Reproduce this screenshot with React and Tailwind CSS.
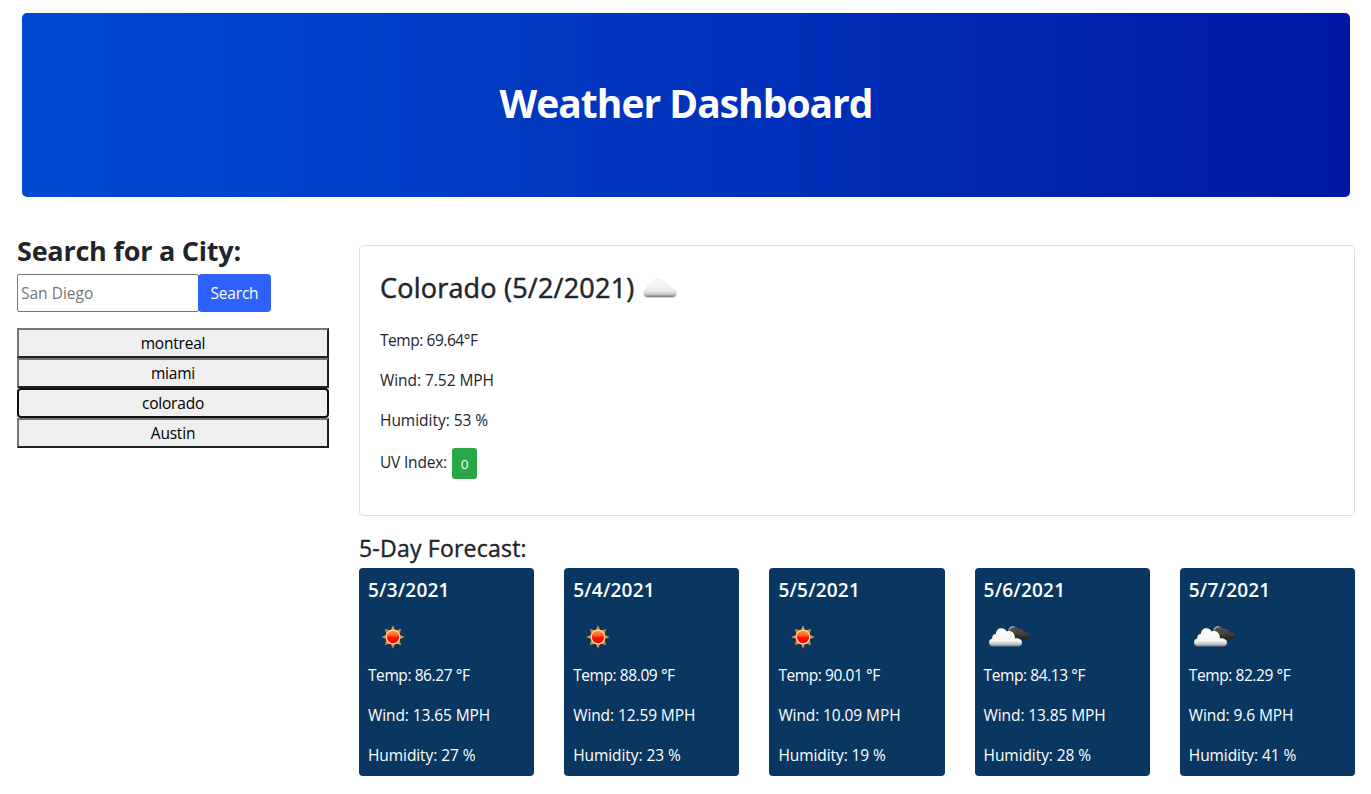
import React from 'react';

const cities = ['montreal', 'miami', 'colorado', 'Austin'];

const forecast = [
  { date: '5/3/2021', icon: 'sun', temp: '86.27', wind: '13.65', humidity: '27' },
  { date: '5/4/2021', icon: 'sun', temp: '88.09', wind: '12.59', humidity: '23' },
  { date: '5/5/2021', icon: 'sun', temp: '90.01', wind: '10.09', humidity: '19' },
  { date: '5/6/2021', icon: 'clouds', temp: '84.13', wind: '13.85', humidity: '28' },
  { date: '5/7/2021', icon: 'clouds', temp: '82.29', wind: '9.6', humidity: '41' },
];

const cloudPath =
  'M5 19.5C2 19.5 .5 17.5 .5 15.3C.5 12.8 2.2 11.2 4.3 10.8C4 7.8 6 5.6 8.5 5.8C9.5 2.5 12 .8 15 .8C18.8 .8 21.5 3 22.3 6.3C25.5 5.8 27.8 8 27.6 11C31.5 10.6 33.7 12.6 33.7 15.3C33.7 18 31.8 19.5 29 19.5Z';

function CloudIcon() {
  return (
    <svg width="35" height="21" viewBox="0 0 35 21" className="shrink-0">
      <defs>
        <linearGradient id="cloud-fill" x1="0" y1="0" x2="0" y2="1">
          <stop offset="0" stopColor="#fbfbfb" />
          <stop offset="0.62" stopColor="#ededee" />
          <stop offset="0.82" stopColor="#d0d0d0" />
          <stop offset="0.93" stopColor="#8b8b8b" />
          <stop offset="1" stopColor="#777" />
        </linearGradient>
      </defs>
      <path d={cloudPath} fill="url(#cloud-fill)" stroke="#dedede" strokeWidth="0.5" />
    </svg>
  );
}

function SunIcon() {
  return (
    <svg width="50" height="50" viewBox="0 0 50 50">
      <defs>
        <linearGradient id="sun-fill" x1="0" y1="0" x2="0" y2="1">
          <stop offset="0" stopColor="#ff9a3c" />
          <stop offset="0.4" stopColor="#ff5a20" />
          <stop offset="0.55" stopColor="#ff1200" />
          <stop offset="1" stopColor="#f90000" />
        </linearGradient>
      </defs>
      <path
        d="M25 13.3L27.3 18.5L33.1 16.9L31.5 22.7L36.7 25L31.5 27.3L33.1 33.1L27.3 31.5L25 36.7L22.7 31.5L16.9 33.1L18.5 27.3L13.3 25L18.5 22.7L16.9 16.9L22.7 18.5Z"
        fill="#dc9136"
      />
      <circle cx="25" cy="25" r="7.4" fill="#ffdcae" />
      <circle cx="25" cy="25" r="6.2" fill="url(#sun-fill)" />
    </svg>
  );
}

function BrokenCloudsIcon() {
  return (
    <svg width="50" height="50" viewBox="0 0 50 50">
      <defs>
        <linearGradient id="back-cloud" x1="0" y1="0" x2="0" y2="1">
          <stop offset="0" stopColor="#5a5553" />
          <stop offset="0.6" stopColor="#444140" />
          <stop offset="1" stopColor="#222" />
        </linearGradient>
        <linearGradient id="front-cloud" x1="0" y1="0" x2="0" y2="1">
          <stop offset="0" stopColor="#ffffff" />
          <stop offset="0.68" stopColor="#f5f5f6" />
          <stop offset="0.86" stopColor="#c9c9c9" />
          <stop offset="1" stopColor="#777" />
        </linearGradient>
      </defs>
      <path
        d="M24 23C22.8 17.5 25.5 14.2 29.5 14.2C32 14.2 33.6 15.3 34.5 17C37 15.9 39.7 17.3 40.3 20.2C43.8 20.4 46.5 22 46.5 23.8C46.5 26 44 27 40 27H33Z"
        fill="url(#back-cloud)"
      />
      <path d="M25 18.5C25.6 15.7 28 14.5 30.5 15" fill="none" stroke="#b5aaa5" strokeWidth="1.2" />
      <path
        d="M9 34.5C6.5 34.5 5 32.7 5 30.5C5 28.3 6.4 26.8 8.2 26.5C8 23.7 9.8 22 11.8 22.1C12.3 18 14.4 16.2 17.2 16.2C20 16.2 21.8 17.7 22.7 19.5C27.5 17.8 30.8 20.8 31 26.4C35.2 26 38 27.8 38 30.7C38 33.1 36.4 34.5 33.8 34.5Z"
        fill="url(#front-cloud)"
      />
    </svg>
  );
}

function SearchPanel() {
  return (
    <aside className="w-[312px] shrink-0">
      <h2 className="h-[41px] whitespace-nowrap pt-px text-[27px] leading-[34px] font-bold tracking-[-0.23px]">
        Search for a City:
      </h2>
      <form className="flex h-[38px]">
        <input
          type="text"
          placeholder="San Diego"
          className="w-[182px] rounded-[2px] border border-[#767676] bg-white px-[3px] pt-[2px] text-[15.5px] tracking-[0px] placeholder:text-[#757575]"
        />
        <button
          type="button"
          className="-ml-px w-[73px] rounded-[4px] bg-[#2f62fd] pt-[2px] text-[15.5px] tracking-[-0.2px] text-white"
        >
          Search
        </button>
      </form>
      <div className="mt-4 flex flex-col">
        {cities.map((city) => (
          <button
            key={city}
            type="button"
            className={
              city === 'colorado'
                ? 'h-[30px] rounded-[4px] border-2 border-[#101010] bg-[#efefef] text-[15.5px] leading-[26px] tracking-[-0.2px] text-black'
                : 'h-[30px] border-2 border-t-[#767676] border-r-[#212121] border-b-[#212121] border-l-[#767676] bg-[#efefef] text-[15.5px] leading-[26px] tracking-[-0.2px] text-black'
            }
          >
            {city}
          </button>
        ))}
      </div>
    </aside>
  );
}

function CurrentWeather() {
  return (
    <section className="flex h-[271px] flex-col rounded-[4px] border border-[#dfdfdf] px-5 pt-[25px]">
      <h2 className="flex h-[34px] items-center gap-[9px] text-[27px] leading-[34px] font-medium tracking-[0.21px]">
        <span className="whitespace-nowrap [-webkit-text-stroke:0.5px_#212529]">Colorado (5/2/2021)</span>
        <CloudIcon />
      </h2>
      <div className="mt-[23px] flex flex-col gap-4 text-[15.5px] leading-6">
        <p className="tracking-[-0.45px]">Temp: 69.64°F</p>
        <p className="tracking-[-0.05px]">Wind: 7.52 MPH</p>
        <p className="tracking-[-0.03px]">Humidity: 53 %</p>
        <div className="flex h-[31px] items-center gap-[5px] tracking-[-0.2px]">
          <span className="pb-[3px] whitespace-nowrap">UV Index:</span>
          <span className="flex h-[31px] w-[25px] items-center justify-center rounded-[3px] bg-[#28a745] pt-px text-[13.5px] text-white">
            0
          </span>
        </div>
      </div>
    </section>
  );
}

function ForecastCard({ day }) {
  return (
    <article className="flex h-[208px] flex-col rounded-[4px] bg-[#0a3761] px-[9px] pt-[10px] text-white">
      <h5 className="text-[19px] leading-6 font-semibold tracking-[0.2px]">{day.date}</h5>
      <div className="mt-[10px] h-[50px]">{day.icon === 'sun' ? <SunIcon /> : <BrokenCloudsIcon />}</div>
      <div className="mt-px flex flex-col gap-4 text-[15.5px] leading-6 font-normal whitespace-nowrap">
        <p className="tracking-[-0.42px]">Temp: {day.temp} °F</p>
        <p className="tracking-[-0.1px]">Wind: {day.wind} MPH</p>
        <p className="tracking-[-0.08px]">Humidity: {day.humidity} %</p>
      </div>
    </article>
  );
}

export default function App() {
  return (
    <div className="h-[794px] w-full overflow-hidden bg-white pt-[13px] font-['Open_Sans','Noto_Sans',sans-serif] text-[#212529]">
      <header className="mr-[21px] ml-[22px] flex h-[184px] items-center justify-center rounded-[5px] bg-linear-to-r from-[#004ad3] to-[#0017a5] pb-[5px]">
        <h1 className="text-[39px] leading-[48px] font-bold tracking-[-1px] whitespace-nowrap text-white">Weather Dashboard</h1>
      </header>
      <div className="flex gap-[30px] pr-4 pl-[17px]">
        <div className="pt-9">
          <SearchPanel />
        </div>
        <main className="min-w-0 flex-1 pt-12">
          <CurrentWeather />
          <h3 className="mt-[17px] h-[35px] text-[23px] leading-[30px] font-medium tracking-[0.22px] [-webkit-text-stroke:0.4px_#212529]">5-Day Forecast:</h3>
          <div className="grid grid-cols-5 gap-[30px]">
            {forecast.map((day) => (
              <ForecastCard key={day.date} day={day} />
            ))}
          </div>
        </main>
      </div>
    </div>
  );
}
